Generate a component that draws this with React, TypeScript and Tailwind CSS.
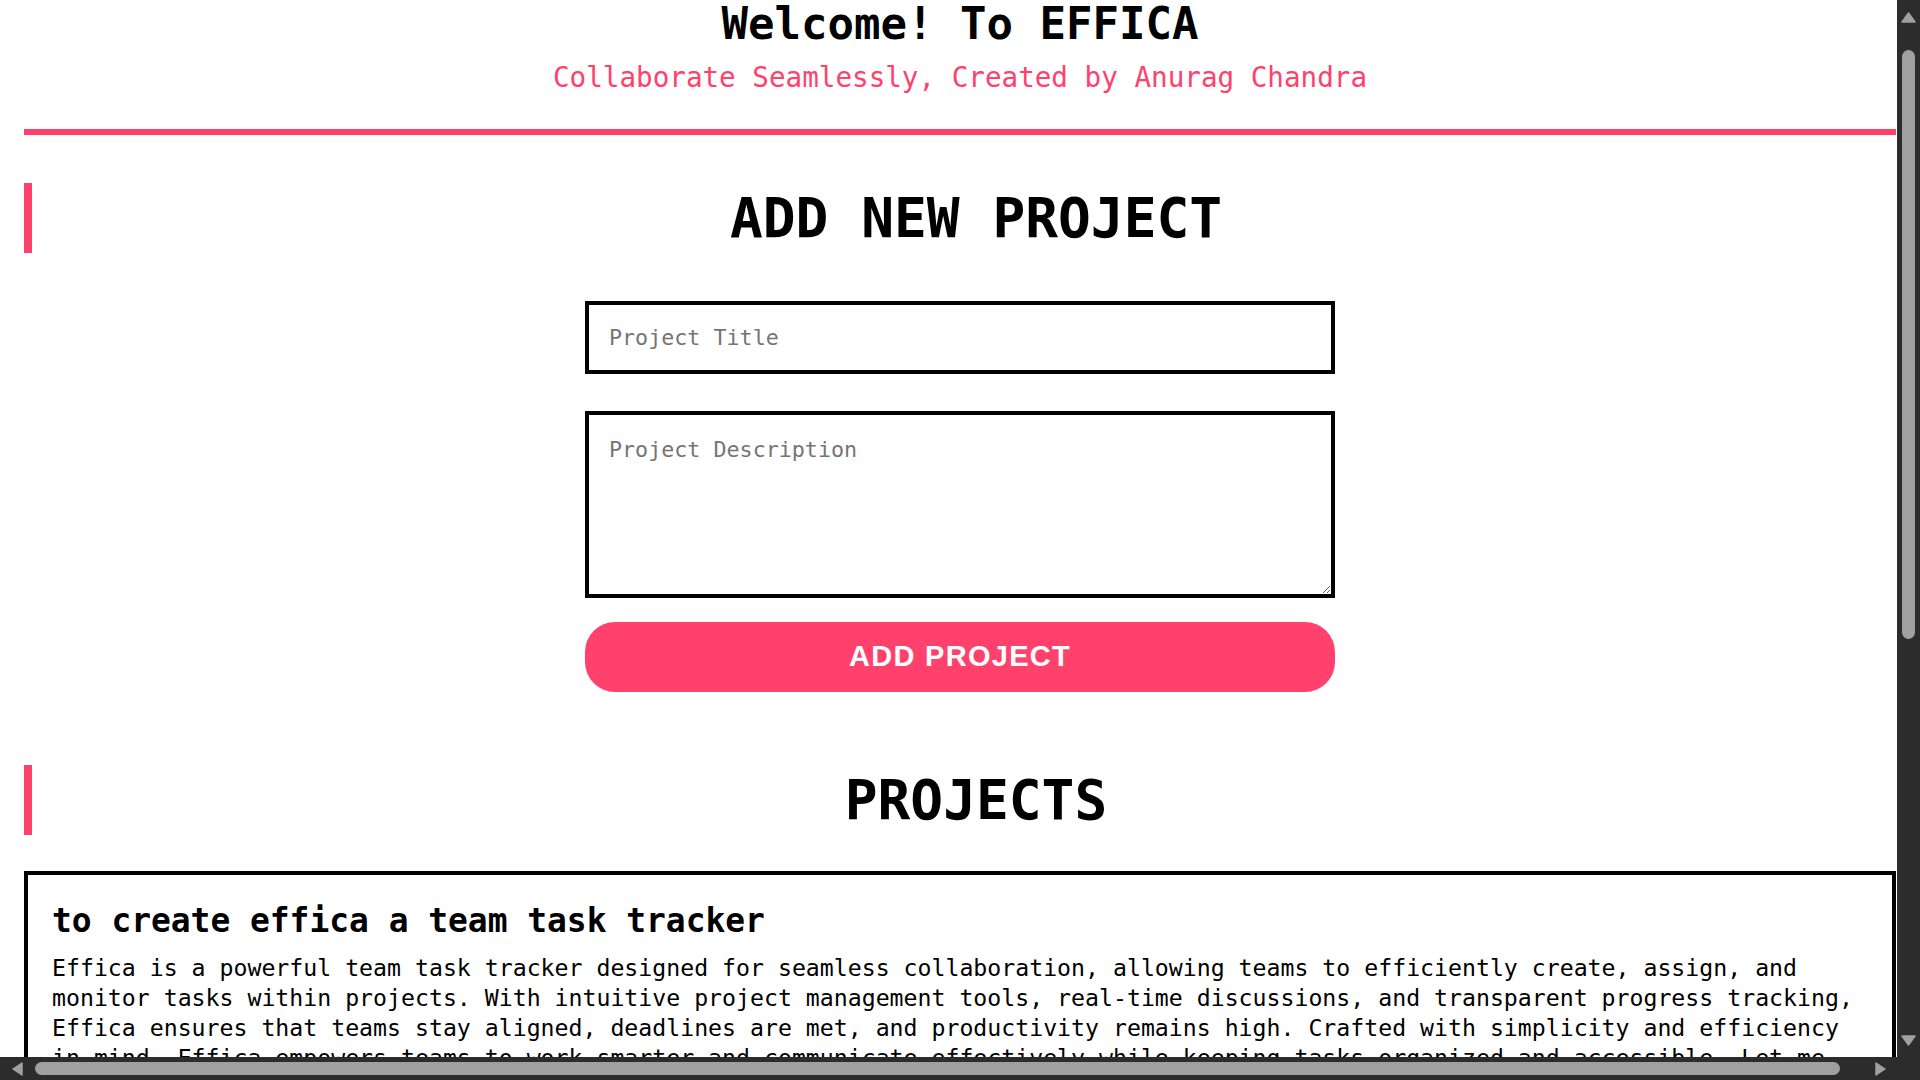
import React from "react";

function Tri({ dir }: { dir: "up" | "down" | "left" | "right" }) {
  const vertical = dir === "up" || dir === "down";
  const w = vertical ? 15 : 11;
  const h = vertical ? 11 : 14;
  let pts = "";
  if (dir === "up") pts = "7.5,1 14,10 1,10";
  if (dir === "down") pts = "1,1 14,1 7.5,10";
  if (dir === "left") pts = "1,7 10,1 10,13";
  if (dir === "right") pts = "1,1 10,7 1,13";
  return (
    <svg width={w} height={h} viewBox={`0 0 ${w} ${h}`}>
      <polygon points={pts} fill="#a0a0a0" stroke="#a0a0a0" strokeWidth="1.5" strokeLinejoin="round" />
    </svg>
  );
}

export default function App() {
  return (
    <div className="grid h-screen w-screen grid-cols-[1fr_23px] grid-rows-[1fr_23px] overflow-hidden bg-[#2c2c2c] font-['DejaVu_Sans_Mono',monospace] text-black">
      {/* page viewport */}
      <div className="min-h-0 min-w-0 overflow-hidden bg-white">
        <div className="w-[1920px] pb-[150px]">
          <header className="text-center">
            <h1 className="text-[44px] font-bold leading-[48px]">Welcome! To EFFICA</h1>
            <p className="mt-[14px] text-[27.6px] leading-[32px] text-[#ff416c]">
              Collaborate Seamlessly, Created by Anurag Chandra
            </p>
          </header>
          <div className="mx-6 mt-[35px] h-[6px] bg-[#ff416c]" />

          <main className="px-6">
            <section>
              <h2 className="mt-12 border-l-8 border-[#ff416c] pl-6 text-center text-[54.5px] font-bold leading-[70px]">
                ADD NEW PROJECT
              </h2>
              <form
                className="mx-auto mt-12 flex w-[750px] flex-col"
                onSubmit={(e) => e.preventDefault()}
              >
                <input
                  type="text"
                  placeholder="Project Title"
                  className="block h-[73px] w-full border-4 border-black bg-white px-5 py-5 text-[21.7px] leading-[25px] outline-none placeholder:text-[#757575]"
                />
                <textarea
                  placeholder="Project Description"
                  className="mt-[37px] block h-[187px] w-full border-4 border-black bg-white px-5 pt-[22px] pb-5 text-[21.7px] leading-[25px] outline-none placeholder:text-[#757575]"
                />
                <button
                  type="submit"
                  className="mt-6 h-[70px] w-full rounded-[30px] bg-[#ff416c] font-['Liberation_Sans',Arial,sans-serif] text-[29px] font-bold tracking-[1.3px] text-white"
                >
                  ADD PROJECT
                </button>
              </form>
            </section>

            <section>
              <h2 className="mt-[73px] border-l-8 border-[#ff416c] pl-6 text-center text-[54.5px] font-bold leading-[70px]">
                PROJECTS
              </h2>
              <div className="mt-9 border-4 border-black px-6 pt-6 pb-8">
                <h3 className="text-[32.9px] font-bold leading-[43px]">
                  to create effica a team task tracker
                </h3>
                <p className="mt-[11px] text-[23.2px] leading-[30px]">
                  Effica is a powerful team task tracker designed for seamless collaboration, allowing teams to efficiently create, assign, and monitor tasks within projects. With intuitive project management tools, real-time discussions, and transparent progress tracking, Effica ensures that teams stay aligned, deadlines are met, and productivity remains high. Crafted with simplicity and efficiency in mind. Effica empowers teams to work smarter and communicate effectively while keeping tasks organized and accessible. Let me know if you need any modifications!
                </p>
              </div>
            </section>
          </main>
        </div>
      </div>

      {/* vertical scrollbar */}
      <div className="flex min-h-0 flex-col bg-[#2c2c2c]">
        <div className="flex h-[34px] shrink-0 items-center justify-center">
          <Tri dir="up" />
        </div>
        <div className="min-h-0 flex-1 pt-[16px]">
          <div className="mx-auto h-[589px] w-[13px] rounded-full bg-[#a0a0a0]" />
        </div>
        <div className="flex h-[34px] shrink-0 items-center justify-center">
          <Tri dir="down" />
        </div>
      </div>

      {/* horizontal scrollbar */}
      <div className="flex min-w-0 flex-row bg-[#2c2c2c]">
        <div className="flex w-[34px] shrink-0 items-center justify-center">
          <Tri dir="left" />
        </div>
        <div className="flex min-w-0 flex-1 items-center pl-[1px]">
          <div className="h-[13px] w-[1805px] rounded-full bg-[#a0a0a0]" />
        </div>
        <div className="flex w-[34px] shrink-0 items-center justify-center">
          <Tri dir="right" />
        </div>
      </div>

      {/* corner */}
      <div className="bg-[#2c2c2c]" />
    </div>
  );
}
